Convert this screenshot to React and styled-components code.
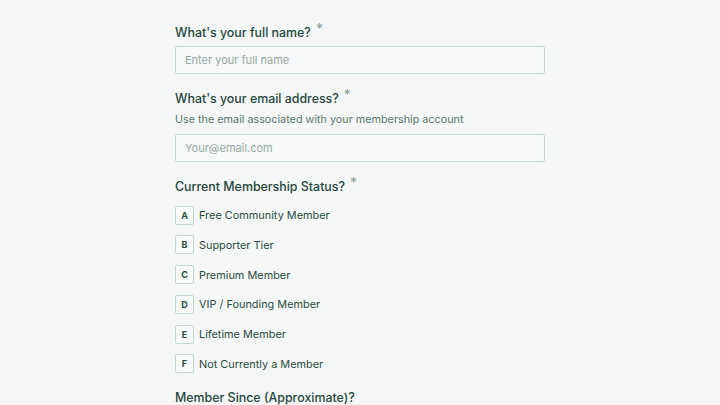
import React from 'react';
import styled, { createGlobalStyle } from 'styled-components';

const GlobalStyle = createGlobalStyle`
  html, body {
    margin: 0;
    padding: 0;
    background: #f4f7f6;
    font-family: Inter, "Noto Sans", "Liberation Sans", sans-serif;
    color: #24463b;
  }
`;

const Page = styled.div`
  width: 370px;
  margin: 0 auto;
  padding-top: 23px;
`;

const Field = styled.div`
  margin-bottom: 15px;
`;

const Label = styled.div`
  font-size: 12.4px;
  font-weight: 500;
  line-height: 20px;
  color: #24463b;
  margin-bottom: ${(p) => (p.$tight ? '3px' : '8.5px')};
`;

const Star = styled.span`
  color: #8a9e96;
  font-size: 14px;
  font-weight: 400;
  line-height: 0;
  vertical-align: 3px;
  margin-left: 5px;
`;

const Help = styled.div`
  font-size: 10.8px;
  line-height: 16px;
  color: #5d766d;
  margin-bottom: 6px;
`;

const Input = styled.input`
  box-sizing: border-box;
  display: block;
  width: 100%;
  height: 28px;
  padding: 0 9px;
  border: 1px solid #c3d8cf;
  border-radius: 2px;
  background: #f6f9f8;
  font-family: inherit;
  font-size: 11px;
  color: #24463b;
  outline: none;

  &::placeholder {
    color: #95a8a0;
  }
`;

const Options = styled.div`
  display: flex;
  flex-direction: column;
  gap: 10.8px;
`;

const Option = styled.div`
  display: flex;
  align-items: center;
  gap: 5px;
  font-size: 10.9px;
  color: #2b4b40;
  cursor: pointer;
`;

const Key = styled.span`
  box-sizing: border-box;
  width: 19px;
  height: 19px;
  display: flex;
  align-items: center;
  justify-content: center;
  border: 1px solid #c3d8cf;
  border-radius: 2px;
  background: #f9fbfa;
  font-size: 9px;
  font-weight: 700;
  color: #2b4b40;
`;

const statuses = [
  'Free Community Member',
  'Supporter Tier',
  'Premium Member',
  'VIP / Founding Member',
  'Lifetime Member',
  'Not Currently a Member',
];

const App = () => (
  <>
    <GlobalStyle />
    <Page>
      <Field>
        <Label $tight>
          What's your full name?<Star>*</Star>
        </Label>
        <Input placeholder="Enter your full name" />
      </Field>
      <Field>
        <Label $tight>
          What's your email address?<Star>*</Star>
        </Label>
        <Help>Use the email associated with your membership account</Help>
        <Input placeholder="Your@email.com" />
      </Field>
      <Field>
        <Label>
          Current Membership Status?<Star>*</Star>
        </Label>
        <Options>
          {statuses.map((s, i) => (
            <Option key={s}>
              <Key>{String.fromCharCode(65 + i)}</Key>
              {s}
            </Option>
          ))}
        </Options>
      </Field>
      <Field>
        <Label>Member Since (Approximate)?</Label>
      </Field>
    </Page>
  </>
);

export default App;
